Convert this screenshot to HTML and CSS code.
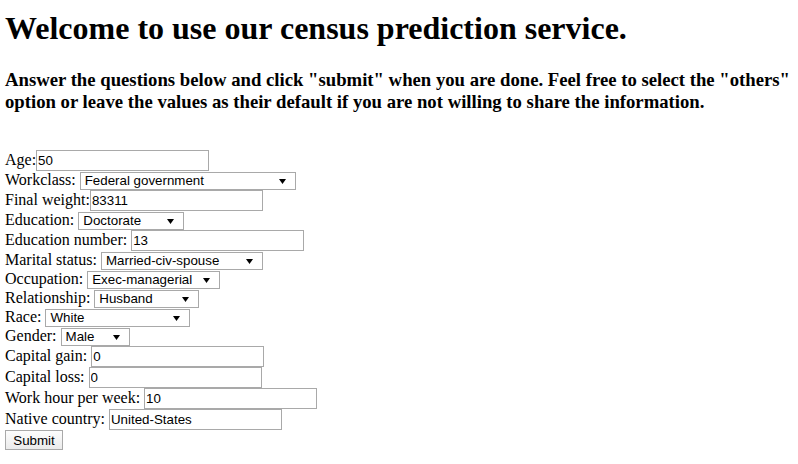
FILE: index.html
```html
<!DOCTYPE html>
<html>
<head>
<meta charset="utf-8">
<title>Census prediction</title>
<link rel="stylesheet" href="styles.css">
</head>
<body>
<h1 class="title">Welcome to use our census prediction service.</h1>
<h3 class="intro">Answer the questions below and click "submit" when you are done. Feel free to select the "others" option or leave the values as their default if you are not willing to share the information.</h3>
<form class="census">
<div class="row"><label>Age:</label><input class="field" type="text" value="50"></div>
<div class="row sel"><label>Workclass: </label><select class="choice w-workclass"><option>Federal government</option></select></div>
<div class="row"><label>Final weight:</label><input class="field" type="text" value="83311"></div>
<div class="row sel"><label>Education: </label><select class="choice w-education"><option>Doctorate</option></select></div>
<div class="row"><label>Education number: </label><input class="field" type="text" value="13"></div>
<div class="row sel"><label>Marital status: </label><select class="choice w-marital"><option>Married-civ-spouse</option></select></div>
<div class="row sel"><label>Occupation: </label><select class="choice w-occupation"><option>Exec-managerial</option></select></div>
<div class="row sel"><label>Relationship: </label><select class="choice w-relationship"><option>Husband</option></select></div>
<div class="row sel"><label>Race: </label><select class="choice w-race"><option>White</option></select></div>
<div class="row sel"><label>Gender: </label><select class="choice w-gender"><option>Male</option></select></div>
<div class="row"><label>Capital gain: </label><input class="field" type="text" value="0"></div>
<div class="row"><label>Capital loss: </label><input class="field" type="text" value="0"></div>
<div class="row"><label>Work hour per week: </label><input class="field" type="text" value="10"></div>
<div class="row"><label>Native country: </label><input class="field" type="text" value="United-States"></div>
<div class="row"><button class="submit" type="button">Submit</button></div>
</form>
</body>
</html>
```
FILE: styles.css
```css
body {
  margin: 0 3px 8px 5px;
  font-family: "Liberation Serif", "Times New Roman", serif;
  font-size: 16px;
  color: #000;
  background: #fff;
}
.title {
  font-size: 32px;
  font-weight: bold;
  margin: 10px 0 22px;
}
.intro {
  font-size: 18.72px;
  font-weight: bold;
  margin: 0 0 37px;
}
.census {
  margin: 0;
}
.row {
  display: flex;
  align-items: flex-start;
  height: 21px;
  white-space: pre;
}
.row.sel {
  height: 19px;
}
label {
  display: inline-block;
  line-height: 20px;
}
.row.sel label {
  line-height: 20px;
  margin-top: -1px;
}
.field {
  box-sizing: border-box;
  width: 173px;
  height: 21px;
  margin: 0;
  padding: 1px 1px;
  border: 1px solid #a9a9a9;
  border-radius: 0;
  font-family: "Liberation Sans", Arial, sans-serif;
  font-size: 13.33px;
  color: #000;
  background: #fff;
  outline: none;
}
.choice {
  -webkit-appearance: none;
  appearance: none;
  box-sizing: border-box;
  height: 18px;
  margin: 1px 0 0;
  padding: 0 0 0 4px;
  border: 1px solid #a9a9a9;
  border-radius: 0;
  font-family: "Liberation Sans", Arial, sans-serif;
  font-size: 13.33px;
  line-height: 16px;
  color: #000;
  background: #fff url("data:image/svg+xml;utf8,<svg xmlns='http://www.w3.org/2000/svg' width='7' height='5'><path d='M0 0H7L3.5 5Z' fill='%23000'/></svg>") no-repeat right 9px center;
}
.w-workclass { width: 216px; }
.w-education { width: 106px; }
.w-marital { width: 162px; }
.w-occupation { width: 133px; }
.w-relationship { width: 105px; }
.w-race { width: 145px; }
.w-gender { width: 69px; }
.submit {
  box-sizing: border-box;
  width: 58px;
  height: 20px;
  margin: 0;
  padding: 0;
  border: 1px solid #a9a9a9;
  border-radius: 0;
  background: linear-gradient(#fdfdfd, #ebebeb);
  font-family: "Liberation Sans", Arial, sans-serif;
  font-size: 13.33px;
  color: #000;
}
```
